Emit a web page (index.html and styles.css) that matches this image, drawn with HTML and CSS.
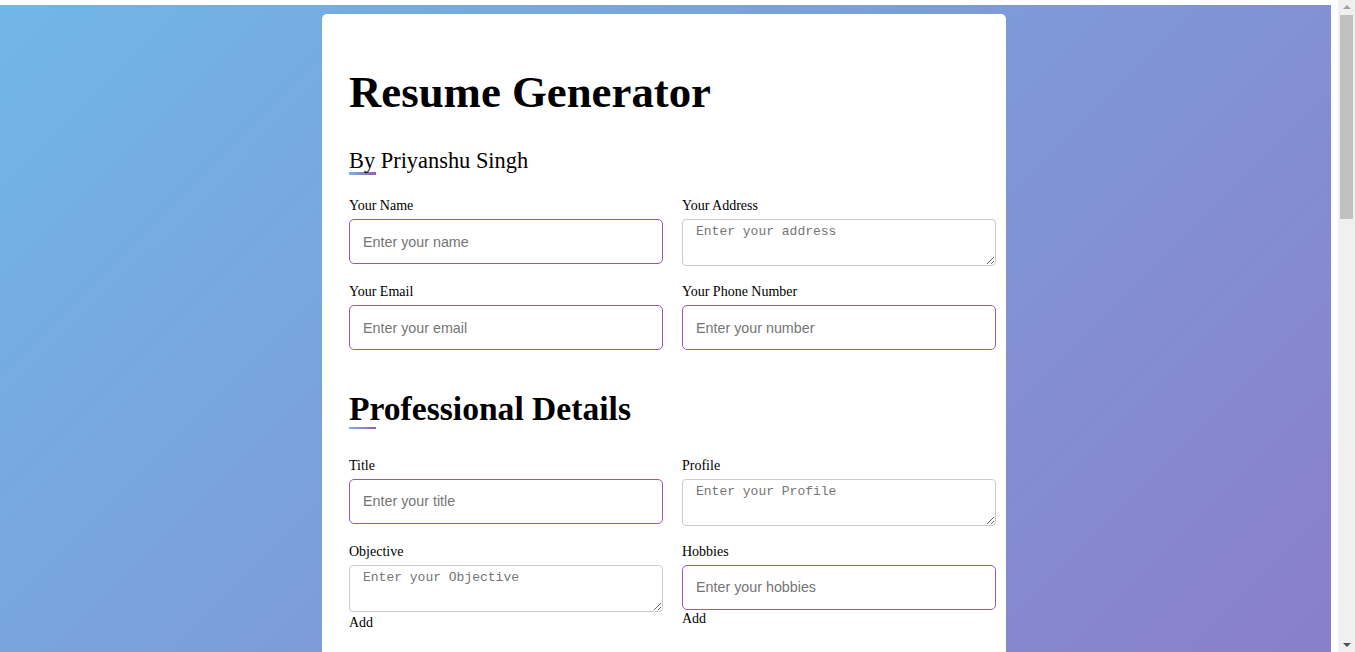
FILE: index.html
```html
<!DOCTYPE html>
<html lang="en">
<head>
<meta charset="utf-8">
<title>Resume Generator</title>
<link rel="stylesheet" href="styles.css">
</head>
<body>
<div class="page">
  <div class="card">
    <h1 class="title">Resume Generator</h1>
    <div class="subtitle">By Priyanshu Singh</div>

    <div class="grid grid-first">
      <div class="field">
        <label>Your Name</label>
        <input class="input" type="text" placeholder="Enter your name">
      </div>
      <div class="field">
        <label>Your Address</label>
        <textarea class="area" placeholder="Enter your address"></textarea>
      </div>
      <div class="field">
        <label>Your Email</label>
        <input class="input" type="email" placeholder="Enter your email">
      </div>
      <div class="field">
        <label>Your Phone Number</label>
        <input class="input" type="text" placeholder="Enter your number">
      </div>
    </div>

    <h2 class="section">Professional Details</h2>

    <div class="grid grid-next">
      <div class="field">
        <label>Title</label>
        <input class="input" type="text" placeholder="Enter your title">
      </div>
      <div class="field">
        <label>Profile</label>
        <textarea class="area" placeholder="Enter your Profile"></textarea>
      </div>
      <div class="field">
        <label>Objective</label>
        <textarea class="area" placeholder="Enter your Objective"></textarea>
        <div class="add">Add</div>
      </div>
      <div class="field">
        <label>Hobbies</label>
        <input class="input" type="text" placeholder="Enter your hobbies">
        <div class="add">Add</div>
      </div>
    </div>
  </div>
</div>
<div class="scrollbar" aria-hidden="true">
  <span class="sb-up"></span>
  <span class="sb-thumb"></span>
  <span class="sb-down"></span>
</div>
</body>
</html>
```

FILE: styles.css
```css
html {
  background: #ffffff;
}

body {
  margin: 0;
  font-family: "Liberation Serif", "Times New Roman", serif;
  color: #000000;
}

.page {
  margin: 5px 24px 0 0;
  padding: 9px 3px 9px 0;
  display: flex;
  justify-content: center;
  background: linear-gradient(135deg, #71b7e6, #9b59b6);
}

.card {
  width: 684px;
  min-height: 1950px;
  box-sizing: border-box;
  background: #ffffff;
  border-radius: 5px;
  padding: 52px 10px 30px 27px;
}

.title {
  margin: 0;
  font-size: 44.8px;
  line-height: 52px;
  font-weight: bold;
}

.subtitle {
  margin-top: 30px;
  font-size: 22.4px;
  line-height: 25px;
}

.subtitle::after {
  content: "";
  display: block;
  width: 27px;
  height: 3px;
  margin-top: -1px;
  background: linear-gradient(to right, #71b7e6, #9b59b6);
}

.section {
  margin: 26px 0 0;
  font-size: 33.6px;
  line-height: 38px;
  font-weight: bold;
}

.section::after {
  content: "";
  display: block;
  width: 27px;
  height: 2px;
  margin-top: -1px;
  background: linear-gradient(to right, #71b7e6, #9b59b6);
}

.grid {
  display: flex;
  flex-wrap: wrap;
  align-items: flex-start;
  column-gap: 19px;
}

.grid-first {
  margin-top: 22px;
}

.grid-next {
  margin-top: 28px;
}

.field {
  width: 314px;
  margin-bottom: 13.5px;
  font-size: 14px;
  line-height: 16px;
}

.field label {
  display: block;
  line-height: 17px;
  margin-bottom: 5px;
}

.input {
  display: block;
  box-sizing: border-box;
  width: 100%;
  height: 45px;
  margin: 0;
  border: 1px solid #9b59b6;
  border-radius: 5px;
  padding: 0 13px;
  font-family: "Liberation Sans", Arial, sans-serif;
  font-size: 14.3px;
  color: #000000;
  background: #ffffff;
  outline: none;
}

.input::placeholder {
  color: #757575;
}

.area {
  display: block;
  box-sizing: border-box;
  width: 100%;
  height: 47px;
  margin: 0 0 3.5px;
  border: 1px solid #cccccc;
  border-radius: 4px;
  padding: 4px 13px;
  font-family: "Liberation Mono", "Courier New", monospace;
  font-size: 13px;
  color: #000000;
  background: #ffffff;
  outline: none;
}

.area::placeholder {
  color: #757575;
}

.add {
  line-height: 16px;
}

.area + .add {
  margin-top: 2px;
}

.input + .add {
  margin-top: 1px;
}

/* browser scrollbar overlay */
.scrollbar {
  position: fixed;
  top: 0;
  right: 0;
  width: 17px;
  height: 100vh;
  background: #f0f0f0;
}

.sb-up {
  position: absolute;
  top: 5px;
  left: 5px;
  width: 0;
  height: 0;
  border-left: 4px solid transparent;
  border-right: 4px solid transparent;
  border-bottom: 4px solid #a3a3a3;
}

.sb-thumb {
  position: absolute;
  top: 15px;
  left: 2px;
  width: 13px;
  height: 204px;
  background: #c1c1c1;
}

.sb-down {
  position: absolute;
  bottom: 5px;
  left: 5px;
  width: 0;
  height: 0;
  border-left: 4px solid transparent;
  border-right: 4px solid transparent;
  border-top: 4px solid #505050;
}
```
